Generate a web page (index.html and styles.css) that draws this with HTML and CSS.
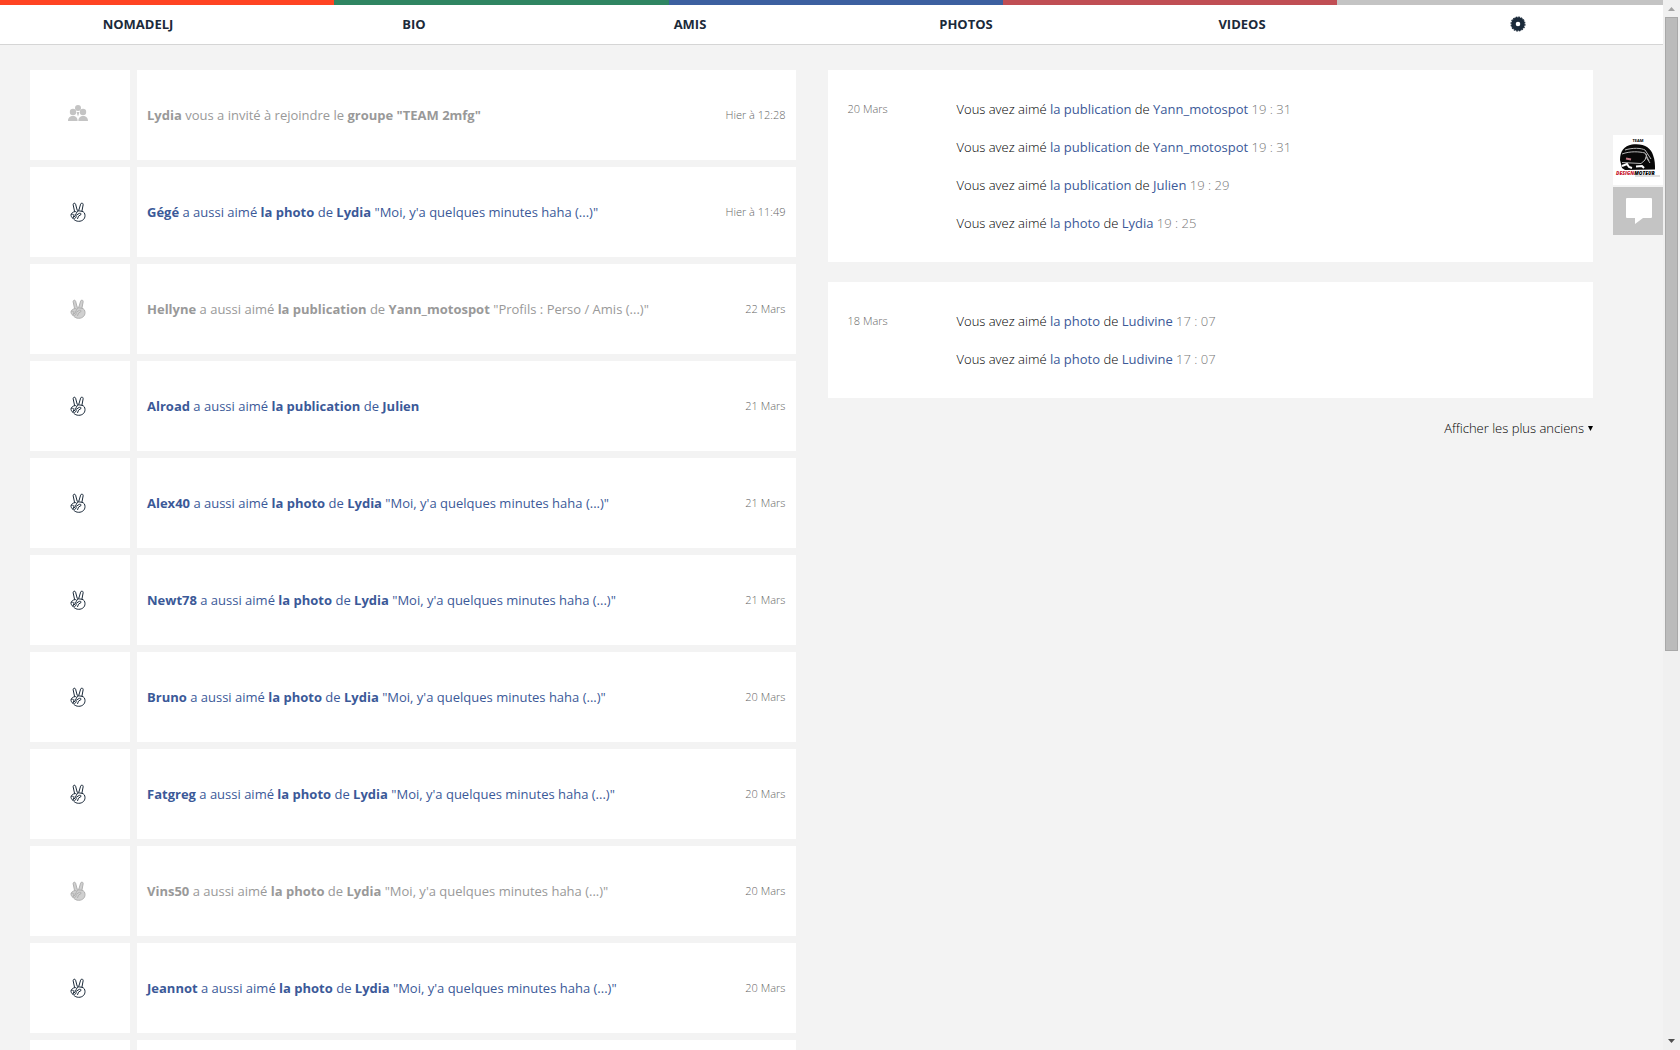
FILE: index.html
```html
<!DOCTYPE html>
<html lang="fr">
<head>
<meta charset="utf-8">
<title>Notifications</title>
<link rel="stylesheet" href="styles.css">
</head>
<body>
<svg class="defs" aria-hidden="true">
  <symbol id="hand" viewBox="0 0 16 20">
    <path class="fill" d="M4.600 9.600 3.200 3C2.800 1 5.100.5 5.600 2.200L7.200 8.300 8.800 8.300 10.600 2.200C11.200.3 13.500 1 13.100 3L11.900 9.300C14 9.700 15 11.400 15 13.600 15 17 12.400 19.300 8.700 19.300 6.500 19.300 5 18.500 3.500 17L1.600 14.900C.3 13 1 10.500 4.600 9.600Z"/>
    <path d="M4.600 9.600C6 9.300 7 10 6.400 11.300L4.800 13M1.600 12.300C3 11.500 4.500 12.800 3.600 14.600M2.900 15.800 6 13.400 9 11.500C10 10.900 11.600 11.500 11 12.500L8.500 14.200 7.600 16.600M11.900 9.300 8.800 8.800 7 10M4.500 16.700 6.500 14.800"/>
  </symbol>
  <symbol id="group" viewBox="0 0 20 16">
    <circle cx="10" cy="3" r="3"/><circle cx="5" cy="7" r="3.200"/><circle cx="15" cy="7" r="3.200"/>
    <path d="M0 16C0 12.500 2 11 4.900 11S9.600 12.500 9.600 16ZM10.400 16C10.400 12.500 12.300 11 15.100 11S20 12.500 20 16ZM8.600 7H11.400L10.800 9.200 10 11.400 9.200 9.200Z"/>
  </symbol>
</svg>

<header class="top">
  <div class="stripes"><i class="s1"></i><i class="s2"></i><i class="s3"></i><i class="s4"></i><i class="s5"></i></div>
  <nav class="nav">
    <a href="#">NOMADELJ</a>
    <a href="#">BIO</a>
    <a href="#">AMIS</a>
    <a href="#">PHOTOS</a>
    <a href="#">VIDEOS</a>
    <a href="#" aria-label="Paramètres"><svg class="gear" viewBox="0 0 16 16"><circle cx="8" cy="8" r="4.500" fill="none" stroke="#1b2a3a" stroke-width="4.400"/><circle cx="8" cy="8" r="6.900" fill="none" stroke="#1b2a3a" stroke-width="1.200" stroke-dasharray="1.800 .91"/></svg></a>
  </nav>
</header>

<main class="page">
  <section class="notes">
    <article class="note read"><div class="icon"><svg class="group"><use href="#group"/></svg></div><div class="body"><p><a href="#">Lydia</a> vous a invité à rejoindre le <a href="#">groupe "TEAM 2mfg"</a></p><time>Hier à 12:28</time></div></article>
    <article class="note"><div class="icon"><svg class="hand"><use href="#hand"/></svg></div><div class="body"><p><a href="#">Gégé</a> a aussi aimé <a href="#">la photo</a> de <a href="#">Lydia</a> "Moi, y'a quelques minutes haha (...)"</p><time>Hier à 11:49</time></div></article>
    <article class="note read"><div class="icon"><svg class="hand"><use href="#hand"/></svg></div><div class="body"><p><a href="#">Hellyne</a> a aussi aimé <a href="#">la publication</a> de <a href="#">Yann_motospot</a> "Profils : Perso / Amis (...)"</p><time>22 Mars</time></div></article>
    <article class="note"><div class="icon"><svg class="hand"><use href="#hand"/></svg></div><div class="body"><p><a href="#">Alroad</a> a aussi aimé <a href="#">la publication</a> de <a href="#">Julien</a></p><time>21 Mars</time></div></article>
    <article class="note"><div class="icon"><svg class="hand"><use href="#hand"/></svg></div><div class="body"><p><a href="#">Alex40</a> a aussi aimé <a href="#">la photo</a> de <a href="#">Lydia</a> "Moi, y'a quelques minutes haha (...)"</p><time>21 Mars</time></div></article>
    <article class="note"><div class="icon"><svg class="hand"><use href="#hand"/></svg></div><div class="body"><p><a href="#">Newt78</a> a aussi aimé <a href="#">la photo</a> de <a href="#">Lydia</a> "Moi, y'a quelques minutes haha (...)"</p><time>21 Mars</time></div></article>
    <article class="note"><div class="icon"><svg class="hand"><use href="#hand"/></svg></div><div class="body"><p><a href="#">Bruno</a> a aussi aimé <a href="#">la photo</a> de <a href="#">Lydia</a> "Moi, y'a quelques minutes haha (...)"</p><time>20 Mars</time></div></article>
    <article class="note"><div class="icon"><svg class="hand"><use href="#hand"/></svg></div><div class="body"><p><a href="#">Fatgreg</a> a aussi aimé <a href="#">la photo</a> de <a href="#">Lydia</a> "Moi, y'a quelques minutes haha (...)"</p><time>20 Mars</time></div></article>
    <article class="note read"><div class="icon"><svg class="hand"><use href="#hand"/></svg></div><div class="body"><p><a href="#">Vins50</a> a aussi aimé <a href="#">la photo</a> de <a href="#">Lydia</a> "Moi, y'a quelques minutes haha (...)"</p><time>20 Mars</time></div></article>
    <article class="note"><div class="icon"><svg class="hand"><use href="#hand"/></svg></div><div class="body"><p><a href="#">Jeannot</a> a aussi aimé <a href="#">la photo</a> de <a href="#">Lydia</a> "Moi, y'a quelques minutes haha (...)"</p><time>20 Mars</time></div></article>
    <article class="note"><div class="icon"></div><div class="body"></div></article>
  </section>

  <section class="history">
    <article class="day">
      <time>20 Mars</time>
      <ul>
        <li>Vous avez aimé <a href="#">la publication</a> de <a href="#">Yann_motospot</a> <span>19 : 31</span></li>
        <li>Vous avez aimé <a href="#">la publication</a> de <a href="#">Yann_motospot</a> <span>19 : 31</span></li>
        <li>Vous avez aimé <a href="#">la publication</a> de <a href="#">Julien</a> <span>19 : 29</span></li>
        <li>Vous avez aimé <a href="#">la photo</a> de <a href="#">Lydia</a> <span>19 : 25</span></li>
      </ul>
    </article>
    <article class="day">
      <time>18 Mars</time>
      <ul>
        <li>Vous avez aimé <a href="#">la photo</a> de <a href="#">Ludivine</a> <span>17 : 07</span></li>
        <li>Vous avez aimé <a href="#">la photo</a> de <a href="#">Ludivine</a> <span>17 : 07</span></li>
      </ul>
    </article>
    <button class="older" type="button">Afficher les plus anciens <svg viewBox="0 0 5 5"><path d="M0 0H5L2.500 5Z"/></svg></button>
  </section>
</main>

<aside class="dock">
  <a class="team" href="#" aria-label="Team Design Moteur">
    <svg viewBox="0 0 50 50">
      <text x="25" y="7" text-anchor="middle" class="team-name">TEAM</text>
      <path d="M7 25C7 16 11 11 19 9.500 31 8 38 13 40 20 42 25 42 30 42 34.500L12 35 9 33 8 29Z" fill="#080808"/>
      <path d="M12 15C20 12.500 28 13 32 15L38 24M9 19C17 16 26 16.500 32 18L36 26M9 27.500 28 28.500 32 25 34 19M33 22 37 28" fill="none" stroke="#b8b8b8"/>
      <path d="M13 23.500 18 24.500" stroke="#c77a86" stroke-width="2"/>
      <path d="M9 31 14 29 16 32 19 33M23 31.500 29 31 31 33" stroke="#fff" stroke-width="2" fill="none"/>
      <text x="3" y="40" class="team-word"><tspan fill="#c8202f">DESIGN</tspan><tspan>MOTEUR</tspan></text>
      <path d="M22 41H47" stroke="#999" stroke-width=".6"/>
    </svg>
  </a>
  <button class="chat" type="button" aria-label="Messages"><svg viewBox="0 0 26 26"><path d="M1 0H25Q26 0 26 1V19Q26 20 25 20H17L9 26V20H1Q0 20 0 19V1Q0 0 1 0Z"/></svg></button>
</aside>

<div class="scrollbar" aria-hidden="true">
  <svg viewBox="0 0 7 4"><path fill="#a3a3a3" d="M0 4 3.500 0 7 4Z"/></svg>
  <div class="track"><div class="thumb"></div></div>
  <svg viewBox="0 0 7 4"><path fill="#505050" d="M0 0H7L3.500 4Z"/></svg>
</div>
</body>
</html>
```
FILE: styles.css
```css
* { box-sizing: border-box; }

body {
  margin: 0;
  height: 100vh;
  overflow: hidden;
  padding-right: 17px;
  background: #f3f3f3;
  color: #000;
  font: 13px/20px "Open Sans", "Noto Sans", sans-serif;
}

a { color: #3b5998; text-decoration: none; }
p, ul { margin: 0; padding: 0; }
ul { list-style: none; }
button { border: 0; padding: 0; background: none; font: inherit; color: inherit; }
.defs { position: absolute; width: 0; height: 0; }

/* Header */
.top { background: #fff; border-bottom: 1px solid #d5d5d5; }
.stripes { display: flex; height: 5px; }
.stripes i { flex: 0 0 20.1%; }
.s1 { background: #ff4422; }
.s2 { background: #2f8562; }
.s3 { background: #3c60a0; }
.s4 { background: #c04e54; }
.stripes .s5 { flex: 1; background: #c4c4c4; }
.nav { display: grid; grid-template-columns: repeat(6, 1fr); height: 39px; padding: 0 7px 1px 0; }
.nav a { display: flex; align-items: center; justify-content: center; color: #1b2a3a; font-weight: 700; }
.gear { width: 16px; height: 16px; }

/* Columns */
.page { display: grid; grid-template-columns: 1fr 1fr; gap: 32px; padding: 25px 70px 0 30px; }
.notes { display: flex; flex-direction: column; gap: 7px; }
.note { display: grid; grid-template-columns: 100px 1fr; gap: 7px; min-height: 90px; color: #3b5998; }
.icon { display: flex; align-items: center; justify-content: center; background: #fff; padding-right: 4px; }
.icon svg { fill: #c4c4c4; }
.icon .hand { width: 16px; height: 20px; fill: #fff; stroke: #1b2a3a; stroke-linecap: round; stroke-linejoin: round; }
.icon .group { width: 20px; height: 16px; margin-bottom: 4px; }
.body { display: flex; align-items: center; justify-content: space-between; padding: 0 10px; background: #fff; }
.note a { font-weight: 700; }
.note time { color: #666; font-size: 11px; font-weight: 300; }
.read, .read a { color: #999; }
.read .icon .hand { fill: #d0d0d0; stroke: #b0b0b0; }

/* History */
.history { display: flex; flex-direction: column; align-items: stretch; gap: 20px; }
.day { display: grid; grid-template-columns: 109px 1fr; padding: 20px; background: #fff; line-height: 38px; }
.day time { color: #666; font-size: 11px; font-weight: 300; }
.day li { font-weight: 300; }
.day li a { font-weight: 400; }
.day span { color: #777; }
.older { align-self: flex-end; display: flex; align-items: center; gap: 4px; font-weight: 300; }
.older svg { width: 5px; height: 5px; }

/* Dock pinned to the window's edge */
.dock { position: fixed; top: 135px; right: 17px; width: 50px; display: flex; flex-direction: column; gap: 2px; }
.team { height: 50px; background: #fff; }
.team svg { display: block; }
.team-name { font: 700 4px "Open Sans", sans-serif; }
.team-word { font: italic 800 5px "Open Sans", sans-serif; }
.chat { display: flex; align-items: center; justify-content: center; height: 48px; background: #c4c4c4; padding-left: 2px; }
.chat svg { width: 26px; height: 26px; fill: #fff; }

/* Scroll bar */
.scrollbar { position: fixed; top: 0; right: 0; bottom: 0; width: 17px; display: flex; flex-direction: column; align-items: center; padding: 7px 0; gap: 6px; background: #f0f0f0; }
.scrollbar svg { width: 7px; height: 4px; }
.track { flex: 1; }
.thumb { width: 13px; height: 62.400%; background: #bbb; border: 1px solid #a8a8a8; }
```
